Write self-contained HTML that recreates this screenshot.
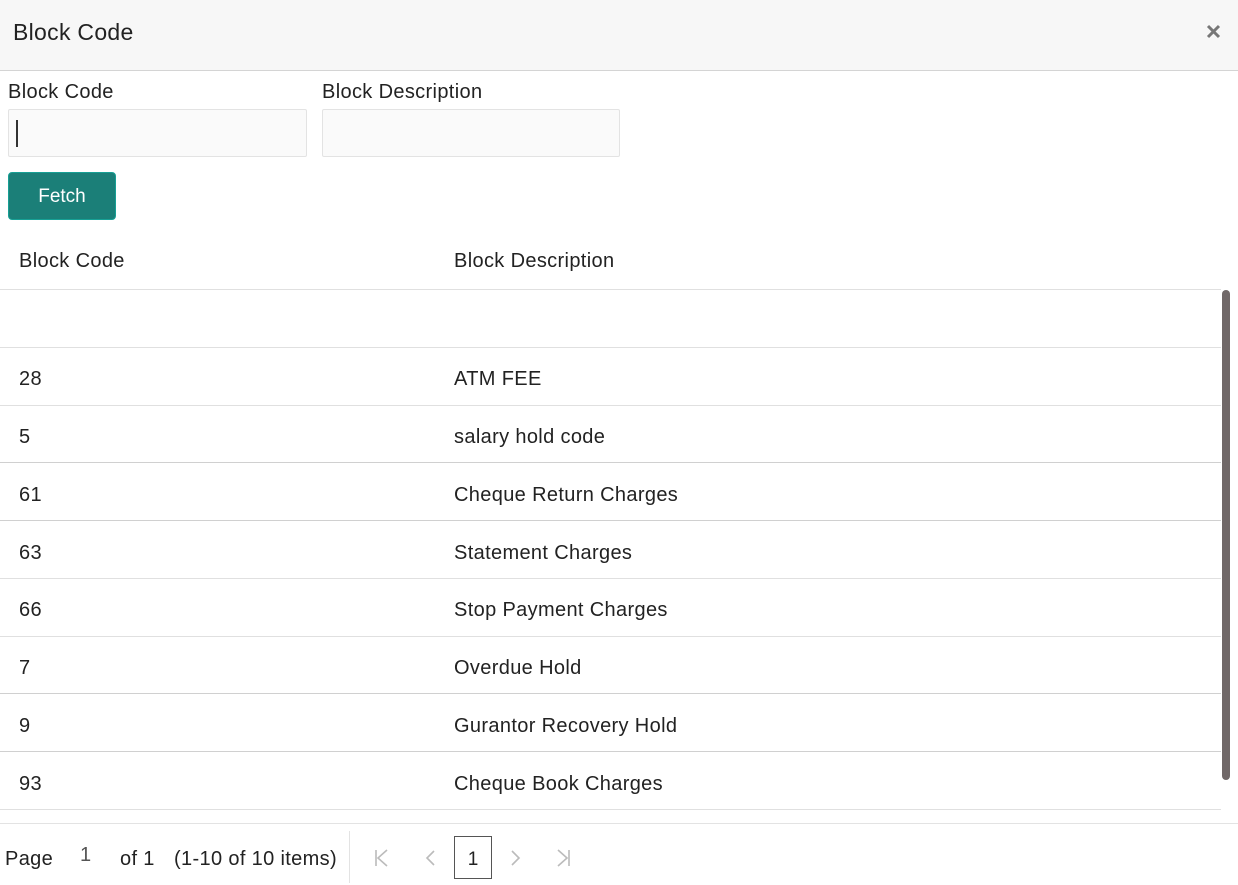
<!DOCTYPE html>
<html><head><style>
*{margin:0;padding:0;box-sizing:border-box}
body{width:1238px;height:885px;overflow:hidden;background:#fff;font-family:"Liberation Sans",sans-serif;color:#222;position:relative}
.a{position:absolute}
.hdr{left:0;top:0;width:1238px;height:71px;background:#f7f7f7;border-bottom:1px solid #d4d4d4}
.t{font-size:23px;letter-spacing:0.3px}
.lbl{font-size:20px;letter-spacing:0.35px}
.inp{background:#fafafa;border:1px solid #e3e3e3;border-radius:2px;height:48px}
.line{left:0;width:1221px;height:1px;background:#e0e0e0}
.c{font-size:20px;letter-spacing:0.35px}
</style></head><body>
<div class="a hdr"></div>
<div class="a t" style="left:13px;top:19px">Block Code</div>
<svg class="a" style="left:1206px;top:24px" width="15" height="15" viewBox="0 0 15 15"><path d="M2 2L13 13M13 2L2 13" stroke="#777" stroke-width="3"/></svg>
<div class="a lbl" style="left:8px;top:81px">Block Code</div>
<div class="a lbl" style="left:322px;top:81px">Block Description</div>
<div class="a inp" style="left:8px;top:109px;width:299px"></div>
<div class="a" style="left:16px;top:120px;width:2px;height:27px;background:#333"></div>
<div class="a inp" style="left:322px;top:109px;width:298px"></div>
<div class="a" style="left:8px;top:172px;width:108px;height:48px;background:#1b7f78;border-radius:4px;border:1px solid #17a095;color:#fff;font-size:19px;text-align:center;line-height:48px">Fetch</div>
<div class="a c" style="left:19px;top:250px">Block Code</div>
<div class="a c" style="left:454px;top:250px">Block Description</div>
<div class="a line" style="top:289px"></div>
<div class="a line" style="top:347px"></div>
<div class="a c" style="left:19px;top:368px">28</div><div class="a c" style="left:454px;top:368px">ATM FEE</div>
<div class="a line" style="top:405px"></div>
<div class="a c" style="left:19px;top:426px">5</div><div class="a c" style="left:454px;top:426px">salary hold code</div>
<div class="a line" style="top:462px;background:#d0d0d0"></div>
<div class="a c" style="left:19px;top:484px">61</div><div class="a c" style="left:454px;top:484px">Cheque Return Charges</div>
<div class="a line" style="top:520px;background:#d0d0d0"></div>
<div class="a c" style="left:19px;top:542px">63</div><div class="a c" style="left:454px;top:542px">Statement Charges</div>
<div class="a line" style="top:578px"></div>
<div class="a c" style="left:19px;top:599px">66</div><div class="a c" style="left:454px;top:599px">Stop Payment Charges</div>
<div class="a line" style="top:636px"></div>
<div class="a c" style="left:19px;top:657px">7</div><div class="a c" style="left:454px;top:657px">Overdue Hold</div>
<div class="a line" style="top:693px;background:#d0d0d0"></div>
<div class="a c" style="left:19px;top:715px">9</div><div class="a c" style="left:454px;top:715px">Gurantor Recovery Hold</div>
<div class="a line" style="top:751px;background:#d0d0d0"></div>
<div class="a c" style="left:19px;top:773px">93</div><div class="a c" style="left:454px;top:773px">Cheque Book Charges</div>
<div class="a line" style="top:809px"></div>
<div class="a" style="left:1222px;top:290px;width:8px;height:490px;background:#706868;border-radius:4px"></div>
<div class="a" style="left:0;top:823px;width:1238px;height:1px;background:#e3e3e3"></div>
<div class="a c" style="left:5px;top:848px">Page</div>
<div class="a c" style="left:80px;top:844px;color:#555">1</div>
<div class="a c" style="left:120px;top:848px">of 1</div>
<div class="a c" style="left:174px;top:848px">(1-10 of 10 items)</div>
<div class="a" style="left:349px;top:831px;width:1px;height:52px;background:#e3e3e3"></div>
<svg class="a" style="left:370px;top:848px" width="220" height="20" viewBox="0 0 220 20" fill="none" stroke="#bbb" stroke-width="1.6">
<path d="M6 2V18M17 2L8 10L17 18"/>
<path d="M64 3L57 10L64 17"/>
<path d="M142 3L149 10L142 17"/>
<path d="M188 2L197 10L188 18M199 2V18"/>
</svg>
<div class="a" style="left:454px;top:836px;width:38px;height:43px;border:1px solid #555;font-size:19px;text-align:center;line-height:45px">1</div>
</body></html>
